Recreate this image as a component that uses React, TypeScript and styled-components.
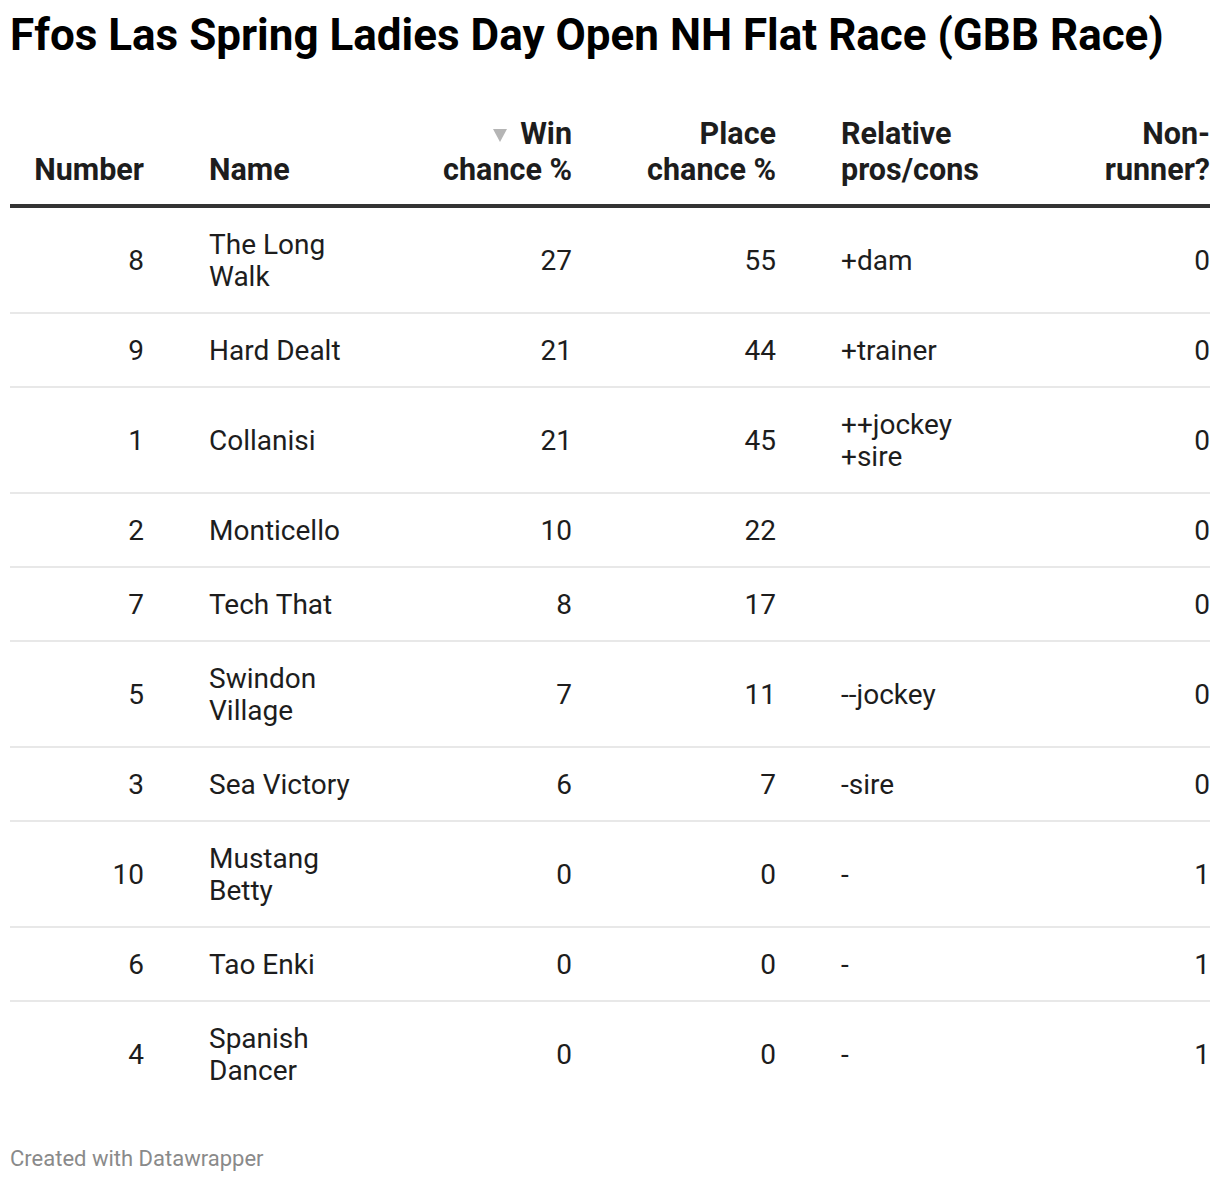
import React from "react";
import styled, { createGlobalStyle } from "styled-components";

const Global = createGlobalStyle`
  html, body { margin: 0; padding: 0; background: #fff; }
  body { font-family: Roboto, "Liberation Sans", Arial, sans-serif; }
`;

const Page = styled.div`
  width: 1200px;
  padding: 9px 10px 0;
  color: #1d1d1d;
`;

const Title = styled.h1`
  margin: 0;
  font-size: 44px;
  line-height: 52px;
  font-weight: 700;
  color: #000;
`;

const Table = styled.table`
  margin-top: 55px;
  width: 1200px;
  border-collapse: collapse;
  table-layout: fixed;
`;

type Align = { $align?: "left" | "right"; $pl?: number; $pr?: number };

const Th = styled.th<Align>`
  font-size: 30.5px;
  line-height: 36px;
  font-weight: 700;
  color: #1d1d1d;
  vertical-align: bottom;
  text-align: ${(p) => p.$align ?? "right"};
  padding: 0 ${(p) => p.$pr ?? 32}px 16px ${(p) => p.$pl ?? 32}px;
  border-bottom: 4px solid #333;
`;

const Tr = styled.tr<{ $last?: boolean }>`
  border-bottom: ${(p) => (p.$last ? "none" : "2px solid #e8e8e8")};
`;

const Td = styled.td<Align>`
  font-size: 28px;
  line-height: 32px;
  font-weight: 400;
  color: #1d1d1d;
  vertical-align: middle;
  text-align: ${(p) => p.$align ?? "right"};
  padding: 21px ${(p) => p.$pr ?? 32}px 19px ${(p) => p.$pl ?? 32}px;
`;

const SortArrow = styled.svg`
  display: inline-block;
  width: 14px;
  height: 13px;
  margin-right: 13px;
  vertical-align: 2px;
`;

const Footer = styled.div`
  margin-top: 40px;
  font-size: 22px;
  line-height: 25px;
  color: #8a8a8a;
`;

type Row = { n: number; name: string; win: number; place: number; rel: string[]; nr: number };

const rows: Row[] = [
  { n: 8, name: "The Long Walk", win: 27, place: 55, rel: ["+dam"], nr: 0 },
  { n: 9, name: "Hard Dealt", win: 21, place: 44, rel: ["+trainer"], nr: 0 },
  { n: 1, name: "Collanisi", win: 21, place: 45, rel: ["++jockey", "+sire"], nr: 0 },
  { n: 2, name: "Monticello", win: 10, place: 22, rel: [], nr: 0 },
  { n: 7, name: "Tech That", win: 8, place: 17, rel: [], nr: 0 },
  { n: 5, name: "Swindon Village", win: 7, place: 11, rel: ["--jockey"], nr: 0 },
  { n: 3, name: "Sea Victory", win: 6, place: 7, rel: ["-sire"], nr: 0 },
  { n: 10, name: "Mustang Betty", win: 0, place: 0, rel: ["-"], nr: 1 },
  { n: 6, name: "Tao Enki", win: 0, place: 0, rel: ["-"], nr: 1 },
  { n: 4, name: "Spanish Dancer", win: 0, place: 0, rel: ["-"], nr: 1 },
];

export default function App() {
  return (
    <>
      <Global />
      <Page>
        <Title>Ffos Las Spring Ladies Day Open NH Flat Race (GBB Race)</Title>
        <Table>
          <colgroup>
            <col style={{ width: 166 }} />
            <col style={{ width: 225 }} />
            <col style={{ width: 203 }} />
            <col style={{ width: 204 }} />
            <col style={{ width: 262 }} />
            <col style={{ width: 140 }} />
          </colgroup>
          <thead>
            <tr>
              <Th $pl={0}>Number</Th>
              <Th $align="left" $pl={33}>Name</Th>
              <Th>
                <SortArrow viewBox="0 0 14 13">
                  <polygon points="0,0 14,0 7,13" fill="#b5b5b5" />
                </SortArrow>
                Win chance %
              </Th>
              <Th>Place chance %</Th>
              <Th $align="left" $pl={33}>Relative pros/cons</Th>
              <Th $pr={0}>Non-runner?</Th>
            </tr>
          </thead>
          <tbody>
            {rows.map((r, i) => (
              <Tr key={r.n} $last={i === rows.length - 1}>
                <Td $pl={0}>{r.n}</Td>
                <Td $align="left" $pl={33}>{r.name}</Td>
                <Td>{r.win}</Td>
                <Td>{r.place}</Td>
                <Td $align="left" $pl={33}>
                  {r.rel.map((t, j) => (
                    <React.Fragment key={j}>
                      {j > 0 && <br />}
                      {t}
                    </React.Fragment>
                  ))}
                </Td>
                <Td $pr={0}>{r.nr}</Td>
              </Tr>
            ))}
          </tbody>
        </Table>
        <Footer>Created with Datawrapper</Footer>
      </Page>
    </>
  );
}
